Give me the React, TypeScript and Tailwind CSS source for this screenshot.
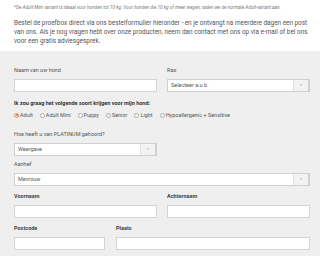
const Field = ({ label, bold, className = "" }: { label: string; bold?: boolean; className?: string }) => (
  <div className={"flex flex-col " + className}>
    <label className={"text-[5.5px] leading-[8px] mb-[5px] " + (bold ? "font-bold text-[#444]" : "text-[#555]")}>{label}</label>
    <div className="h-[13px] bg-white border border-[#d4d4d4]" />
  </div>
);

const Select = ({ label, value, className = "" }: { label: string; value: string; className?: string }) => (
  <div className={"flex flex-col " + className}>
    <label className="text-[5.5px] leading-[8px] mb-[5px] text-[#555]">{label}</label>
    <div className="h-[13px] bg-white border border-[#d0d0d0] border-r-2 flex items-stretch">
      <span className="flex-1 pl-[3px] text-[5.5px] leading-[11px] text-[#555]">{value}</span>
      <span className="w-[15px] bg-[#f2f2f2] border-l border-[#e2e2e2] flex items-center justify-center">
        <span className="text-[3px] text-[#aaa]">▼</span>
      </span>
    </div>
  </div>
);

const Radio = ({ label, checked }: { label: string; checked?: boolean }) => (
  <span className="flex items-center gap-[1px]">
    <span
      className={
        "w-[5px] h-[5px] rounded-full border flex items-center justify-center " +
        (checked ? "border-[#e8915e] bg-[#fbe3d3]" : "border-[#aaa] bg-white")
      }
    >
      {checked && <span className="w-[2px] h-[2px] rounded-full bg-[#e8763a]" />}
    </span>
    <span className="text-[5.5px] leading-[8px] text-[#555]">{label}</span>
  </span>
);

export default function App() {
  return (
    <div className="w-[320px] h-[256px] overflow-hidden bg-[#efefef]" style={{ fontFamily: "Roboto, 'Liberation Sans', sans-serif" }}>
      {/* intro */}
      <div className="bg-white pl-[14px] pr-[10px] pt-[5px] pb-[5px]">
        <p className="italic text-[4.7px] leading-[6px] text-[#777] whitespace-nowrap">
          *De Adult Mini variant is ideaal voor honden tot 10 kg. Voor honden die 10 kg of meer wegen, raden we de normale Adult-variant aan.
        </p>
        <p className="mt-[8px] text-[6.4px] leading-[9px] text-[#555]">
          Bestel de proefbox direct via ons bestelformulier hieronder - en je ontvangt na meerdere dagen een post van ons. Als je nog vragen hebt over onze producten, neem dan contact met ons op via e-mail of bel ons voor een gratis adviesgesprek.
        </p>
      </div>

      {/* form */}
      <div className="pl-[14px] pr-[10px] pt-[15px]">
        <div className="grid grid-cols-2 gap-x-[10px]">
          <Field label="Naam van uw hond" />
          <Select label="Ras" value="Selecteer a.u.b." />
        </div>

        <p className="mt-[7px] text-[5.5px] leading-[8px] font-bold text-[#333]">
          Ik zou graag het volgende soort krijgen voor mijn hond:
        </p>
        <div className="mt-[4px] flex items-center gap-[7px]">
          <Radio label="Adult" checked />
          <Radio label="Adult Mini" />
          <Radio label="Puppy" />
          <Radio label="Senior" />
          <Radio label="Light" />
          <Radio label="Hypoallergenic + Sensitive" />
        </div>

        <div className="grid grid-cols-2 gap-x-[10px] mt-[11px]">
          <Select label="Hoe heeft u van PLATINUM gehoord?" value="Weergave" />
        </div>

        <Select label="Aanhef" value="Mevrouw" className="mt-[4px]" />

        <div className="grid grid-cols-2 gap-x-[10px] mt-[6px]">
          <Field label="Voornaam" bold />
          <Field label="Achternaam" bold />
        </div>

        <div className="flex gap-x-[11px] mt-[6px]">
          <Field label="Postcode" bold className="w-[91px]" />
          <Field label="Plaats" bold className="flex-1" />
        </div>
      </div>
    </div>
  );
}
